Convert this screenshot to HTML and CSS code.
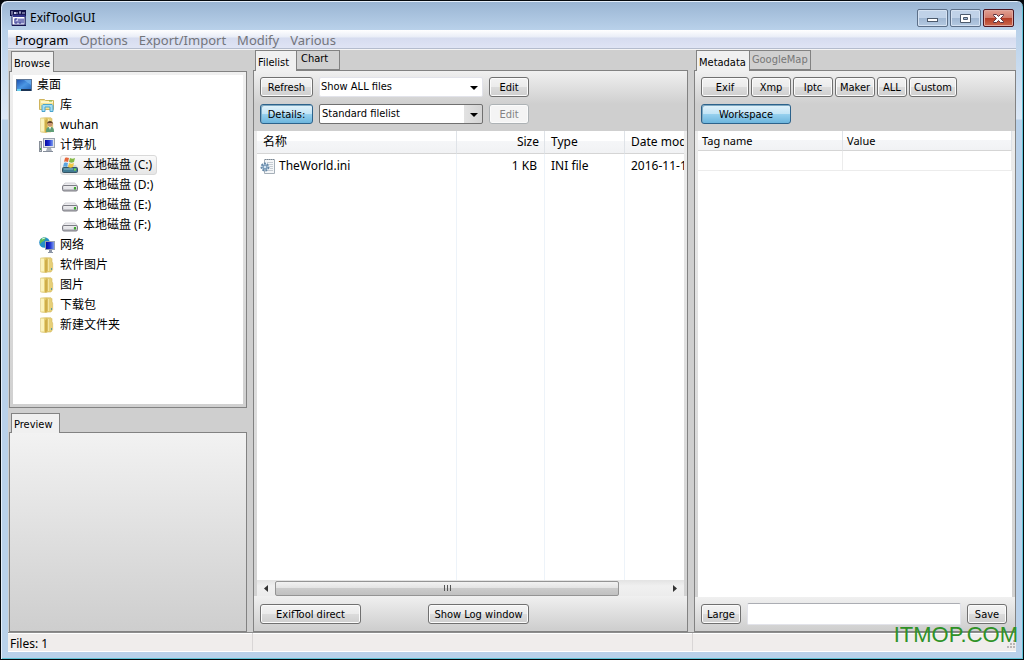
FILE: index.html
```html
<!DOCTYPE html>
<html lang="zh-CN">
<head>
<meta charset="utf-8">
<title>ExifToolGUI</title>
<link rel="stylesheet" href="styles.css">
</head>
<body>
<svg class="defs" width="0" height="0" aria-hidden="true">
  <defs>
    <linearGradient id="fold" x1="0" x2="1"><stop offset="0" stop-color="#fbf1b0"/><stop offset="1" stop-color="#d8b951"/></linearGradient>
    <linearGradient id="blue" x1="0" y1="0" x2="1" y2="1"><stop offset="0" stop-color="#1b4fae"/><stop offset=".5" stop-color="#4b96e3"/><stop offset="1" stop-color="#2465bd"/></linearGradient>
    <linearGradient id="screen" x1="0" x2="1"><stop offset="0" stop-color="#0509a0"/><stop offset=".5" stop-color="#1c2fd0"/><stop offset="1" stop-color="#7d9df0"/></linearGradient>
    <linearGradient id="metal" x1="0" y1="0" x2="0" y2="1"><stop offset="0" stop-color="#fafafa"/><stop offset="1" stop-color="#a9a9b0"/></linearGradient>
    <symbol id="i-folder" viewBox="0 0 16 16">
      <path d="M1.500 1l6-.5 1 1V15l-2 1-5-1z" fill="url(#fold)" stroke="#dcca84" stroke-width=".6"/>
      <path d="M8 .800h4l1 1V5l.7 1v6.500L12 15H7V5z" fill="#e6cf78" stroke="#d3b95c" stroke-width=".6"/>
      <path d="M6 3.500L8.500 2v12L6 15.500z" fill="#cfae49"/><path d="M2 2l3-.3V14.500L2 14z" fill="#fbf3bd"/>
      <path d="M9.500 2v12" stroke="#f5e5a0"/><path d="M12.500 11v2" stroke="#5e9ca0"/>
    </symbol>
    <symbol id="i-drive" viewBox="0 0 16 16">
      <path d="M3 6h10l2.500 3H.5z" fill="#ededf0" stroke="#c0c0c5" stroke-width=".7"/>
      <rect x=".5" y="8.500" width="15" height="5.500" rx="1.500" fill="url(#metal)" stroke="#7c7c84"/>
      <rect x="2" y="10" width="9" height="2" fill="#e6e6ea"/><rect x="12" y="10" width="2" height="2.500" fill="#3da52d"/>
    </symbol>
  </defs>
</svg>
<div class="window">
  <header class="titlebar">
    <svg class="app-icon" viewBox="0 0 16 16" aria-hidden="true">
      <rect width="16" height="6" fill="#101048"/><path d="M1 2h2M1 4h2M4 2l2 2M6 2L4 4M7 2v2M9 2h2M10 2v2M12 3h1M14 2v2" stroke="#c9cbe8"/>
      <rect x="2" y="5" width="13" height="10" fill="#fff" stroke="#24246c"/><rect x="3" y="5" width="12" height="2" fill="#34348b"/>
      <rect x="4" y="8" width="10" height="6" fill="#c4c6ea"/>
      <path d="M7 9H5v4h2v-2M9 9v4h2V9M13 9v4" fill="none" stroke="#34368c"/><path d="M2 15.500h14V6" fill="none" stroke="#15154f"/>
    </svg>
    <h1 class="title">ExifToolGUI</h1>
    <div class="caption-buttons">
      <button class="caption" type="button" aria-label="Minimize"><svg viewBox="0 0 29 16"><rect x="9.500" y="8.500" width="10" height="3" fill="#fff" stroke="#4c5a6c"/></svg></button>
      <button class="caption" type="button" aria-label="Maximize"><svg viewBox="0 0 29 16"><path d="M9.500 4.500h10v8h-10zM12.500 7.500v2h4v-2z" fill="#fff" fill-rule="evenodd" stroke="#4c5a6c"/></svg></button>
      <button class="caption close" type="button" aria-label="Close"><svg viewBox="0 0 29 16"><path d="M9.500 4.500h3l2 2 2-2h3v1l-3 3 3 3v1h-3l-2-2-2 2h-3v-1l3-3-3-3z" fill="#fff" stroke="#5c3440"/></svg></button>
    </div>
  </header>
  <div class="client">
    <nav class="menubar">
      <button type="button" class="menu active">Program</button>
      <button type="button" class="menu">Options</button>
      <button type="button" class="menu">Export/Import</button>
      <button type="button" class="menu">Modify</button>
      <button type="button" class="menu">Various</button>
    </nav>
    <main class="workspace">
      <div class="left">
        <section class="pane browse">
          <div class="tabs"><button type="button" class="tab on">Browse</button></div>
          <div class="sheet">
            <ul class="tree">
              <li><span class="node"><svg viewBox="0 0 16 16"><rect x=".5" y="2.500" width="15" height="11" fill="url(#blue)" stroke="#5d7697"/><path d="M1 12h14v2H1z" fill="#1c3455"/><path d="M1 12h4v2H1z" fill="#6bd0ee"/><path d="M8 3h7v5z" fill="#78b5ef" opacity=".6"/></svg>桌面</span>
                <ul>
                  <li><span class="node"><svg viewBox="0 0 16 16"><path d="M.5 2.500h5l1 1h8v9H.5z" fill="#f3e294" stroke="#cfb45d"/><path d="M2 5h12" stroke="#fff6c8" stroke-width="2"/><path d="M10 4h3" stroke="#76b849"/><path d="M3 14.500v-6l1-1h9l1 1v6h-3V10H6v4.500z" fill="#a4dcf4" stroke="#4aa4cd"/></svg>库</span></li>
                  <li><span class="node"><svg viewBox="0 0 16 16"><use href="#i-folder"/><path d="M7 15c0-4 1-5 4-5s4 1 4 5z" fill="#5f9d76"/><path d="M10 10l1 3 1-3z" fill="#fff"/><circle cx="11" cy="7" r="2.500" fill="#c99472"/><path d="M8 7c0-4 6-4 6 0l-1-1H9z" fill="#5e4028"/></svg>wuhan</span></li>
                  <li><span class="node"><svg viewBox="0 0 16 16"><rect x=".5" y="4.500" width="2" height="10" fill="#c5c9cf" stroke="#888f99"/><path d="M1 12h1" stroke="#3da83d" stroke-width="2"/><rect x="4.500" y="1.500" width="11" height="9" fill="#dfe3e8" stroke="#9ba3b0"/><rect x="6" y="3" width="8" height="6" fill="url(#screen)"/><path d="M8 11h4l1 3H7z" fill="#aab1bc"/><path d="M4 14.500h10" stroke="#858d9a"/></svg>计算机</span>
                    <ul>
                      <li><span class="node selected"><svg viewBox="0 0 16 16"><path d="M2 8h12l1.500 3H.5z" fill="#cbd6dc"/><rect x=".5" y="10.500" width="15" height="5" rx="1" fill="#427c94" stroke="#365564"/><path d="M2 12h9" stroke="#86b8c9"/><path d="M12 12.500h2" stroke="#6de33e" stroke-width="2"/><path d="M3 1c2-1 3 0 4 0L6 5C5 5 4 4 2 5z" fill="#e5663b"/><path d="M8 1c2 1 3 1 5 0l-1 4c-2 1-3 1-5 0z" fill="#84b944"/><path d="M2 6c2-1 3 0 4 0L5 10c-1 0-2-1-4 0z" fill="#5ba4df"/><path d="M7 6c2 1 3 1 5 0l-1 4c-2 1-3 1-5 0z" fill="#f1c744"/></svg>本地磁盘 (C:)</span></li>
                      <li><span class="node"><svg viewBox="0 0 16 16"><use href="#i-drive"/></svg>本地磁盘 (D:)</span></li>
                      <li><span class="node"><svg viewBox="0 0 16 16"><use href="#i-drive"/></svg>本地磁盘 (E:)</span></li>
                      <li><span class="node"><svg viewBox="0 0 16 16"><use href="#i-drive"/></svg>本地磁盘 (F:)</span></li>
                    </ul>
                  </li>
                  <li><span class="node"><svg viewBox="0 0 16 16"><circle cx="5.500" cy="5.500" r="5.300" fill="#258fc9"/><path d="M1 3c2-3 5-3 6-2L5 4 3 5 1 7zM7 5l3-1v4l-3 2z" fill="#61bd59"/><path d="M3 2l3-1" stroke="#d2f4e1"/><rect x="6.500" y="4.500" width="9" height="8" fill="#dfe3e8" stroke="#9ba3b0"/><rect x="7" y="5" width="8" height="7" fill="url(#screen)"/><path d="M10 13h3v2h1v1H9v-1h1z" fill="#8b94a5"/></svg>网络</span></li>
                  <li><span class="node"><svg viewBox="0 0 16 16"><use href="#i-folder"/></svg>软件图片</span></li>
                  <li><span class="node"><svg viewBox="0 0 16 16"><use href="#i-folder"/></svg>图片</span></li>
                  <li><span class="node"><svg viewBox="0 0 16 16"><use href="#i-folder"/></svg>下载包</span></li>
                  <li><span class="node"><svg viewBox="0 0 16 16"><use href="#i-folder"/></svg>新建文件夹</span></li>
                </ul>
              </li>
            </ul>
          </div>
        </section>
        <section class="pane preview">
          <div class="tabs"><button type="button" class="tab on roomy">Preview</button></div>
          <div class="sheet fade"></div>
        </section>
      </div>

      <section class="pane">
        <div class="tabs"><button type="button" class="tab on roomy">Filelist</button><button type="button" class="tab chart">Chart</button></div>
        <div class="sheet">
          <div class="toolbar file-tools">
            <button type="button" class="btn">Refresh</button>
            <span class="combo flat"><select aria-label="File filter"><option>Show ALL files</option></select></span>
            <button type="button" class="btn">Edit</button>
            <button type="button" class="btn pressed">Details:</button>
            <span class="combo"><select aria-label="Column set"><option>Standard filelist</option></select></span>
            <button type="button" class="btn" disabled>Edit</button>
          </div>
          <div class="list">
            <table class="files">
              <colgroup><col class="c-name"><col class="c-size"><col class="c-type"><col></colgroup>
              <thead><tr><th>名称</th><th class="num">Size</th><th>Type</th><th class="cut">Date modified</th></tr></thead>
              <tbody>
                <tr><td><span class="file"><svg viewBox="0 0 16 16"><path d="M4.500 1.500h10v14h-10z" fill="#f4f6f8" stroke="#a5afb8"/><path d="M5 1.500h9" stroke="#7c8791" stroke-dasharray="1 1"/><path d="M7 4.500h6M9 6.500h4M10 8.500h3M10 10.500h3M8 12.500h5" stroke="#c6ccd2"/><circle cx="5" cy="9" r="3.500" fill="#d4e5f3" stroke="#6587a6" stroke-width="2" stroke-dasharray="2 1"/><circle cx="5" cy="9" r="2" fill="none" stroke="#5b81a5"/></svg>TheWorld.ini</span></td><td class="num">1 KB</td><td>INI file</td><td class="cut">2016-11-15</td></tr>
                <tr class="rest"><td></td><td></td><td></td><td></td></tr>
              </tbody>
            </table>
          </div>
          <div class="scrollbar">
            <svg viewBox="0 0 16 16"><path d="M10 5v7L6 8.500z" fill="#333"/></svg>
            <div class="track"><div class="thumb"><i></i><i></i><i></i></div></div>
            <svg viewBox="0 0 16 16"><path d="M6 5v7l4-3.500z" fill="#333"/></svg>
          </div>
          <div class="toolbar file-actions">
            <button type="button" class="btn">ExifTool direct</button>
            <button type="button" class="btn">Show Log window</button>
          </div>
        </div>
      </section>

      <section class="pane meta">
        <div class="tabs"><button type="button" class="tab on">Metadata</button><button type="button" class="tab dim">GoogleMap</button></div>
        <div class="sheet">
          <div class="toolbar meta-tools">
            <button type="button" class="btn w48">Exif</button>
            <button type="button" class="btn w40">Xmp</button>
            <button type="button" class="btn w40">Iptc</button>
            <button type="button" class="btn w40">Maker</button>
            <button type="button" class="btn w30">ALL</button>
            <button type="button" class="btn w48">Custom</button>
            <button type="button" class="btn w90 pressed">Workspace</button>
          </div>
          <div class="list">
            <table class="tags">
              <colgroup><col class="c-tag"><col></colgroup>
              <thead><tr><th>Tag name</th><th>Value</th></tr></thead>
              <tbody><tr><td></td><td></td></tr></tbody>
            </table>
          </div>
          <div class="toolbar meta-edit">
            <button type="button" class="btn w40">Large</button>
            <input type="text" aria-label="Tag value">
            <button type="button" class="btn w40">Save</button>
          </div>
        </div>
      </section>
    </main>
    <footer class="status"><span>Files: 1</span><span></span><span></span>
      <svg class="grip" viewBox="0 0 12 12"><path d="M9 2h2M6 5h2M9 5h2M3 8h2M6 8h2M9 8h2" stroke="#b9b6b6" stroke-width="2"/></svg>
    </footer>
  </div>
  <div class="watermark">ITMOP.COM</div>
</div>
</body>
</html>
```
FILE: styles.css
```css
* { box-sizing: border-box; }

body {
  margin: 0;
  background: #05090d;
  color: #000;
  font: 11px/16px "Noto Sans", "Noto Sans CJK SC", sans-serif;
}

button, input, select { font: inherit; color: inherit; margin: 0; padding: 0; }
ul { list-style: none; margin: 0; padding: 0; }
.defs { position: absolute; }

/* Window frame */
.window {
  position: relative;
  height: 100vh;
  display: flex;
  flex-direction: column;
  padding: 1px 7px 7px;
  border: 1px solid #05090d;
  border-radius: 7px 7px 0 0;
  box-shadow: inset 1px 1px #e4eefa, inset -1px -1px #5fc3d6;
  background: linear-gradient(#99b4d2, #b9d1ea 29px, #dce8f6 118px, #b9d1ea 119px);
}
.titlebar { display: flex; align-items: center; height: 28px; padding: 4px 2px 0 2px; flex: none; }
.app-icon { width: 16px; height: 16px; }
.title { flex: 1; margin: 0 0 0 4px; font-size: 12px; font-weight: 400; }
.caption-buttons { display: flex; gap: 2px; }
.caption {
  width: 31px;
  height: 18px;
  border: 1px solid #5c6f88;
  border-radius: 2px;
  box-shadow: inset 0 0 0 1px #d5e2f2;
  background: linear-gradient(#c0d2e8 50%, #9fb6d2 50%, #b5cae2);
}
.caption svg { display: block; width: 29px; height: 16px; }
.caption.close {
  border-color: #4d1520;
  box-shadow: inset 0 0 0 1px #e0a79d;
  background: linear-gradient(#e2a093, #d07a6a 50%, #b33a24 50%, #cc6a4e);
}

.client { flex: 1; display: flex; flex-direction: column; min-height: 0; background: #cfcfcf; }

.menubar {
  display: flex;
  gap: 11px;
  height: 20px;
  padding: 0 7px;
  flex: none;
  border-bottom: 1px solid #f4f4f4;
  box-shadow: inset 0 -1px #b4bccd;
  background: linear-gradient(#fff, #e9edf7 7px, #d6dcef 8px, #e0e5f5);
}
.menu { border: 0; background: none; font-size: 13px; line-height: 18px; color: #73757b; }
.menu.active { color: #000; }

/* Panes */
.workspace {
  flex: 1;
  min-height: 0;
  display: grid;
  grid-template-columns: 238px minmax(0, 1fr) 322px;
  gap: 6px;
  padding: 0 0 0 1px;
}
.left { display: flex; flex-direction: column; gap: 5px; min-height: 0; }
.pane { display: flex; flex-direction: column; min-height: 0; min-width: 0; }
.browse { flex: 357; padding-top: 1px; }
.preview { flex: 219; }
.tabs { display: flex; height: 20px; padding-left: 2px; flex: none; }
.preview .tabs { height: 19px; }
.tab {
  height: 20px;
  padding: 0 3px 0 2px;
  border: 1px solid #828282;
  background: #d0d0d0;
}
.tab, .btn, .combo { font-family: "DejaVu Sans Condensed", "Noto Sans", sans-serif; }
.tab.on { position: relative; z-index: 1; height: 21px; padding-top: 3px; border-bottom: 0; background: #f0f0f0; }
.preview .tab.on { height: 20px; }
.tab.roomy { padding-right: 7px; }
.tab.chart { padding: 0 11px 2px 4px; border-left: 0; }
.tab.dim { padding: 0 2px; border-left: 0; color: #777; }
.sheet {
  flex: 1;
  min-height: 0;
  display: flex;
  flex-direction: column;
  padding: 3px;
  border: 1px solid #828282;
  background: linear-gradient(#f0f0f0, #d0d0d0);
}
.sheet.fade { background: linear-gradient(#f2f2f2, #cecece); }

/* Folder tree */
.tree { flex: 1; background: #fff; padding-left: 3px; font-size: 12px; overflow: hidden; }
.tree ul { padding-left: 23px; }
.node { display: inline-flex; align-items: center; gap: 5px; height: 20px; vertical-align: top; white-space: nowrap; }
.node svg { width: 16px; height: 16px; flex: none; }
.tree li { min-height: 20px; }
.node.selected {
  margin-left: -2px;
  padding: 0 4px 0 1px;
  border: 1px solid #d9d9d9;
  border-radius: 3px;
  background: linear-gradient(#fafafa, #e6e6e6);
}

/* Buttons and fields */
.btn {
  height: 20px;
  padding-top: 2px;
  border: 1px solid #707070;
  border-radius: 3px;
  box-shadow: inset 0 0 0 1px #fbfbfb;
  background: linear-gradient(#f3f3f3, #ebebeb 50%, #dcdcdc 50%, #cfcfcf);
  line-height: 16px;
  white-space: nowrap;
}
.btn.pressed {
  border-color: #2c628b;
  box-shadow: inset 1px 1px #7fa9c2;
  background: linear-gradient(#e3f3fb, #c2e4f6 50%, #98d1ef 50%, #6cb5dd);
}
.btn:disabled { border-color: #adb2b5; background: #f4f4f4; color: #838383; }
.w30 { width: 30px; }
.w40 { width: 40px; }
.w48 { width: 48px; }
.w90 { width: 90px; }

.toolbar { flex: none; margin: 0 -3px; padding: 0 6px; background: linear-gradient(#f0f0f0, #cfcfcf 33px); }
.file-tools {
  display: grid;
  grid-template-columns: 53px 164px 40px;
  gap: 7px 6px;
  margin-top: -3px;
  padding-top: 6px;
  height: 60px;
  align-content: start;
}
.combo {
  position: relative;
  height: 20px;
  border: 1px solid #707070;
  border-radius: 2px;
  background: linear-gradient(90deg, #fff 144px, #e2e2e2 144px, #d4d4d4);
}
.combo select { width: 100%; height: 18px; padding-left: 2px; border: 0; appearance: none; background: none; display: block; }
.combo::after {
  content: "";
  position: absolute;
  right: 4px;
  top: 8px;
  border: 4px solid transparent;
  border-top-color: #000;
  border-bottom: 0;
  pointer-events: none;
}
.combo.flat { border-color: #e2e3ea; background: #fff; }
.combo.flat select { padding-left: 1px; }

.meta-tools { display: flex; flex-wrap: wrap; align-content: start; gap: 7px 2px; margin-top: -3px; padding-top: 6px; height: 60px; }
.file-actions { display: flex; gap: 67px; height: 35px; padding-top: 8px; margin-bottom: -3px; }
.file-actions .btn { width: 101px; }
.meta-edit { display: flex; align-items: center; gap: 6px; height: 34px; padding-right: 8px; margin-bottom: -3px; }
.meta-edit input { flex: 1; min-width: 0; height: 22px; border: 1px solid #e2e3ea; border-top-color: #abadb3; border-radius: 2px; padding: 0 3px; background: #fff; }

/* Lists */
.list { flex: 1; min-height: 0; overflow: hidden; background: #fff; }
table { table-layout: fixed; border-collapse: separate; border-spacing: 0; }
th, td { padding: 0 5px 0 6px; text-align: left; font-weight: 400; white-space: nowrap; overflow: hidden; }
th { background: linear-gradient(#fff 45%, #f5f6f8 46%, #f1f2f4); border-right: 1px solid #dfe3e8; border-bottom: 1px solid #d5d5d5; }
.num { text-align: right; }
.files { width: 100%; height: 100%; font-size: 12px; }
.files th { height: 23px; }
.files td { height: 24px; border-right: 1px solid #edf3f9; }
.files td.num { padding-right: 7px; }
.files .rest td { height: auto; }
.files td:first-child { padding-left: 3px; }
.files .cut { padding-right: 0; border-right: 0; }
.files .rest td:last-child { border-right: 0; }
.c-name { width: 200px; }
.c-size { width: 88px; }
.c-type { width: 80px; }
.file { display: flex; align-items: center; gap: 3px; }
.file svg { width: 16px; height: 16px; }
.tags { width: 100%; font-size: 11px; }
.tags th { height: 20px; padding-left: 4px; }
.tags td { height: 20px; border-right: 1px solid #ececec; border-bottom: 1px solid #ececec; }
.c-tag { width: 145px; }

.scrollbar { display: flex; align-items: center; flex: none; height: 16px; background: linear-gradient(#e3e3e3, #f0f0f0 6px, #ececec); }
.scrollbar svg { width: 18px; height: 16px; flex: none; }
.track { flex: 1; }
.thumb {
  display: flex;
  align-items: center;
  justify-content: center;
  gap: 2px;
  width: 88%;
  height: 15px;
  border: 1px solid #949494;
  border-radius: 2px;
  background: linear-gradient(#f2f2f2, #e2e2e2 50%, #cbcbcb 50%, #c1c1c1);
}
.thumb i { width: 1px; height: 6px; background: #555; }

/* Status bar */
.status {
  display: grid;
  grid-template-columns: 245px minmax(0, 1fr) 323px;
  position: relative;
  height: 20px;
  flex: none;
  border-top: 1px solid #8d8d8d;
  border-bottom: 1px solid #fff;
  box-shadow: inset 0 1px #fff;
  background: #f0edec;
  font-size: 12px;
  line-height: 22px;
}
.status span { height: 18px; padding-left: 2px; border-right: 1px solid #d9d6d6; }
.status span:last-of-type { border-right: 0; }
.grip { position: absolute; right: 0; bottom: 0; width: 12px; height: 12px; }

.watermark {
  position: absolute;
  right: 5px;
  bottom: 11px;
  color: #2f9227;
  font: 22px/26px "Liberation Sans", Arial, sans-serif;
  pointer-events: none;
}
```
